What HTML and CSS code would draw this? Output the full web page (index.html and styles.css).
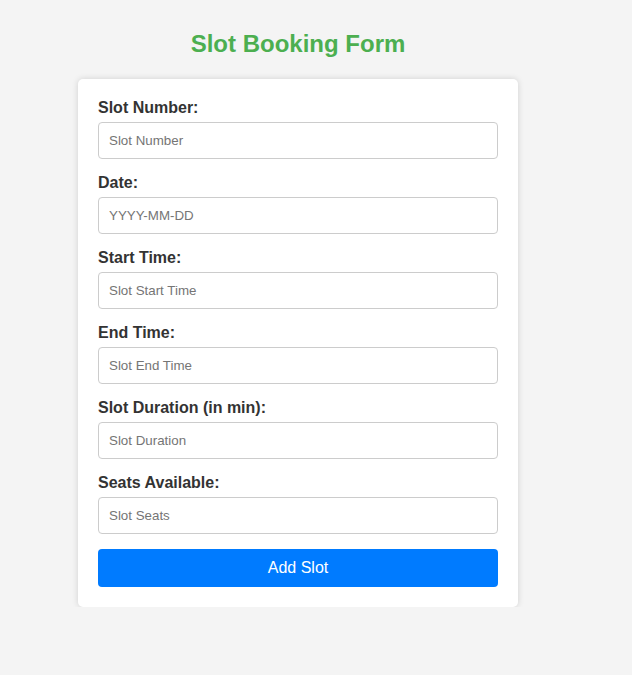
FILE: index.html
```html
<!DOCTYPE html>
<html lang="en">
<head>
<meta charset="utf-8">
<title>Slot Booking Form</title>
<link rel="stylesheet" href="styles.css">
</head>
<body>
<div class="page">
  <h2 class="title">Slot Booking Form</h2>
  <form class="card">
    <label class="label" for="num">Slot Number:</label>
    <input class="field" id="num" type="text" placeholder="Slot Number">
    <label class="label" for="date">Date:</label>
    <input class="field" id="date" type="text" placeholder="YYYY-MM-DD">
    <label class="label" for="start">Start Time:</label>
    <input class="field" id="start" type="text" placeholder="Slot Start Time">
    <label class="label" for="end">End Time:</label>
    <input class="field" id="end" type="text" placeholder="Slot End Time">
    <label class="label" for="dur">Slot Duration (in min):</label>
    <input class="field" id="dur" type="text" placeholder="Slot Duration">
    <label class="label" for="seats">Seats Available:</label>
    <input class="field" id="seats" type="text" placeholder="Slot Seats">
    <button class="submit" type="button">Add Slot</button>
  </form>
</div>
</body>
</html>
```
FILE: styles.css
```css
html, body {
  margin: 0;
  padding: 0;
  background: #f4f4f4;
  font-family: "Liberation Sans", Arial, sans-serif;
}
.page {
  width: 596px;
  padding-top: 30px;
  display: flex;
  flex-direction: column;
  align-items: center;
}
.title {
  margin: 0 0 22px;
  font-size: 24px;
  font-weight: bold;
  color: #4caf50;
  line-height: 27px;
}
.card {
  width: 400px;
  padding: 20px;
  background: #fff;
  border-radius: 5px;
  box-shadow: 0 0 6px rgba(0, 0, 0, 0.15);
  display: flex;
  flex-direction: column;
}
.label {
  display: block;
  font-size: 16px;
  line-height: 18px;
  font-weight: bold;
  color: #333;
  margin: 0 0 5px;
}
.field {
  box-sizing: border-box;
  width: 100%;
  height: 37px;
  padding: 10px;
  margin: 0 0 15px;
  border: 1px solid #ccc;
  border-radius: 4px;
  font-family: "Liberation Sans", Arial, sans-serif;
  font-size: 13.33px;
  color: #333;
  background: #fff;
}
.field::placeholder {
  color: #757575;
}
.submit {
  box-sizing: border-box;
  width: 100%;
  height: 38px;
  padding: 10px;
  border: none;
  border-radius: 4px;
  background: #007bff;
  color: #fff;
  font-family: "Liberation Sans", Arial, sans-serif;
  font-size: 16px;
  cursor: pointer;
}
```
